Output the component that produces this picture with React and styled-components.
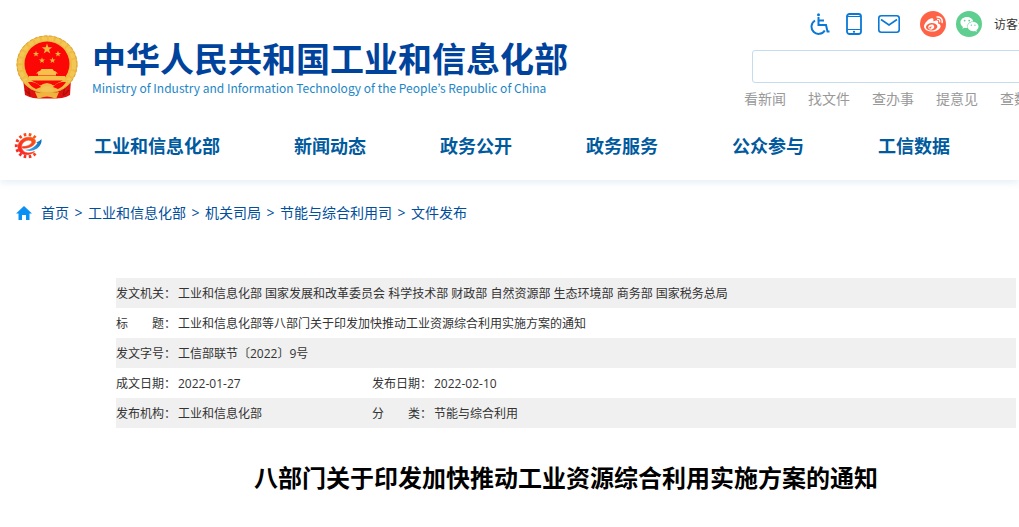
import React from 'react';
import styled, { createGlobalStyle } from 'styled-components';
import { FaWeibo, FaWeixin } from 'react-icons/fa';

const GlobalStyle = createGlobalStyle`
  * {
    box-sizing: border-box;
  }

  body {
    margin: 0;
    overflow-x: hidden;
    background: #fff;
    color: #333;
    font-family: 'Open Sans', 'Noto Sans CJK SC', sans-serif;
    font-size: 12px;
  }

  a {
    color: inherit;
    text-decoration: none;
  }
`;

const Page = styled.div`
  overflow: hidden;
`;

const Header = styled.header`
  box-shadow: 0 2px 8px rgba(0, 98, 170, 0.12);
`;

const TopBar = styled.div`
  display: flex;
  justify-content: space-between;
  min-width: 1116px;
  height: 112px;
  padding-left: 16px;
`;

const Brand = styled.a`
  display: flex;
  align-items: flex-start;
  gap: 14px;
  padding-top: 35px;
`;

const BrandText = styled.div`
  display: flex;
  flex-direction: column;
  padding-top: 2px;
  font-family: 'Noto Sans CJK KR', 'Noto Sans CJK SC', sans-serif;
  white-space: nowrap;
`;

const BrandName = styled.span`
  color: #00439c;
  font-family: 'Noto Sans CJK SC', sans-serif;
  font-size: 34px;
  font-weight: 700;
  line-height: 42px;
`;

const BrandSub = styled.span`
  color: #1c86c7;
  font-size: 12px;
  line-height: 18px;
`;

const Tools = styled.div`
  display: flex;
  flex-direction: column;
  width: 372px;
  padding-top: 11px;
`;

const ToolRow = styled.div`
  display: flex;
  align-items: center;
  gap: ${(props) => props.$gap}px;
`;

const Shortcuts = styled(ToolRow)`
  height: 26px;
  padding-left: 66px;
  white-space: nowrap;
`;

const IconLink = styled.a`
  display: flex;
`;

const RoundLink = styled.a`
  display: flex;
  align-items: center;
  justify-content: center;
  width: 26px;
  height: 26px;
  border-radius: 50%;
  background: ${(props) => props.$color};
  color: #fff;
  font-size: 19px;
`;

const SearchInput = styled.input`
  height: 33px;
  margin: 13px 0 6px 8px;
  padding: 0 10px;
  border: 1px solid #c5dcef;
  border-radius: 3px;
  outline: none;
  font: inherit;
`;

const QuickLinks = styled(ToolRow)`
  color: #999;
  font-size: 14px;
  line-height: 20px;
  white-space: nowrap;
`;

const Nav = styled.nav`
  display: flex;
  align-items: center;
  height: 68px;
  padding-left: 14px;
  gap: 52px;
`;

const NavList = styled.div`
  display: flex;
  gap: 74px;
  color: #005a9e;
  font-size: 18px;
  font-weight: 700;
  line-height: 24px;
  white-space: nowrap;
`;

const Breadcrumb = styled.nav`
  display: flex;
  align-items: center;
  gap: 5px;
  padding: 22px 16px 54px;
  color: #004e9c;
  font-size: 14px;
  line-height: 22px;
`;

const HomeLink = styled.a`
  display: flex;
  margin-right: 4px;
`;

const Separator = styled.span`
  width: 9px;
  text-align: center;
`;

const Article = styled.main`
  padding: 0 3px 31px 116px;
`;

const InfoTable = styled.table`
  width: 100%;
  border-collapse: collapse;
  table-layout: fixed;
  line-height: 28px;
`;

const InfoRow = styled.tr`
  &:nth-child(odd) {
    background: #f0f0f0;
  }
`;

const Label = styled.th`
  padding: 2px 0 0;
  font-weight: 400;
  text-align: left;
  white-space: nowrap;
`;

const Value = styled.td`
  padding: 2px 0 0;
`;

const Title = styled.h1`
  margin: 32px 0 0;
  color: #000;
  font-size: 24px;
  font-weight: 700;
  line-height: 36px;
  text-align: center;
`;

const STAR = '0,-1 0.24,-0.32 0.95,-0.31 0.38,0.12 0.59,0.81 0,0.4 -0.59,0.81 -0.38,0.12 -0.95,-0.31 -0.24,-0.32';

const stars = [
  [31, 14, 5.5],
  [20, 19, 3.2],
  [42, 19, 3.2],
  [26, 25.5, 3.2],
  [36.5, 25.5, 3.2],
];

function Emblem() {
  return (
    <svg width="62" height="64" viewBox="0 0 62 64" aria-hidden="true">
      <path d="M7 44L9 60q4 2 8 3l6 .5h17l6-.5q5-1 8-3l1-16z" fill="#e0120f" />
      <path d="M12 51l2 10M49 51l-2 10M9 55l5 5M53 55l-5 5" stroke="#a80f0c" strokeWidth="1.2" />
      <ellipse cx="31" cy="29.5" rx="30.5" ry="29" fill="#eebb45" />
      <ellipse cx="31" cy="29.5" rx="27" ry="26" fill="none" stroke="#f3c655" strokeWidth="4" strokeDasharray="5 2" />
      <ellipse cx="31" cy="29.5" rx="30" ry="28.6" fill="none" stroke="#dca336" strokeWidth="1" strokeDasharray="3 2" />
      <circle cx="31" cy="29" r="22.5" fill="#fb0806" />
      {stars.map(([x, y, r]) => (
        <polygon key={`${x}-${y}`} points={STAR} transform={`translate(${x} ${y}) scale(${r})`} fill="#f5b53c" />
      ))}
      <path d="M23 36h16l3 2.500H20zM22 38.500h18v2H22zM13 41h36v4.500H13z" fill="#f6c04b" />
      <path d="M24 36l1.500-2h11l1.500 2z" fill="#f6c04b" />
      <path d="M9 45q11 1 15 6l3-2 4-1 4 1 3 2q4-5 15-6l-4 6q-8 6-18 6T12 51z" fill="#f0bb48" />
      <path d="M16 47q6 1 9 5l-5 2q-5-2-8-7zM46 47q-6 1-9 5l5 2q5-2 8-7z" fill="#fb0806" />
      <path d="M19 57l6 1 6-3 6 3 6-1-3 7q-9-5-18 0z" fill="#efb43f" />
      <path d="M26 53q5-4 10 0l2 2q-7 4-14 0z" fill="#f4c355" />
    </svg>
  );
}

function GearLogo() {
  return (
    <svg width="28" height="26" viewBox="0 0 28 26" fill="none" aria-hidden="true">
      <defs>
        <linearGradient id="gear" x1="0" y1="1" x2="1" y2="0">
          <stop offset="0" stopColor="#f5222a" />
          <stop offset="1" stopColor="#fa5a12" />
        </linearGradient>
        <linearGradient id="tail" x1="0" y1="1" x2="1" y2="0">
          <stop offset="0" stopColor="#45b2ee" />
          <stop offset="1" stopColor="#0565b8" />
        </linearGradient>
      </defs>
      <path d="M21.500 4.800A11.200 11.200 0 1 0 21.500 20.500" stroke="url(#gear)" strokeWidth="3" strokeDasharray="2.600 2.400" />
      <path
        d="M8.500 15C14 16 21.500 12.500 21.500 8.500C21.500 4 14 3 9.500 5.500C3.500 9 2.500 15.500 6 19.300C9.500 22.800 16.500 22.500 20.500 18.500C15.500 20.800 10.500 20.200 8.500 17C6.200 13 8.500 9 12.500 7.600C15.500 6.700 18 7.500 17.800 9.200C17.300 11.800 12 13.800 8.500 13.600Z"
        fill="url(#gear)"
        stroke="url(#gear)"
        strokeWidth="0.600"
      />
      <path d="M10 16.500C15.500 17.500 20.500 14.500 23.500 10L22 9.500Q26 8 27.500 6Q28 11.500 23.500 15.300Q17 19.800 10 16.500Z" fill="url(#tail)" />
    </svg>
  );
}

function AccessIcon() {
  return (
    <svg width="20" height="22" viewBox="0 0 20 22" fill="none" stroke="#0a78d6" strokeWidth="2" aria-hidden="true">
      <circle cx="8.500" cy="1.700" r="1.500" fill="#0a78d6" stroke="none" />
      <path d="M8.500 4v8h7.500l1.500 6.500h2" />
      <path d="M8.500 7.500h5.500" />
      <path d="M5 7.500A7.200 7.200 0 1 0 14.800 17.500" />
    </svg>
  );
}

function PhoneIcon() {
  return (
    <svg width="16" height="22" viewBox="0 0 16 22" fill="none" stroke="#0a78d6" aria-hidden="true">
      <rect x="1" y="1" width="14" height="20" rx="2.500" strokeWidth="1.800" />
      <path d="M1 3.500h14M1 16.500h14" strokeWidth="1.200" />
      <circle cx="8" cy="18.800" r="1.100" fill="#0a78d6" stroke="none" />
    </svg>
  );
}

function MailIcon() {
  return (
    <svg width="22" height="18" viewBox="0 0 22 18" fill="none" stroke="#0a78d6" strokeWidth="1.600" aria-hidden="true">
      <rect x="0.800" y="0.800" width="20.400" height="16.400" rx="2.500" />
      <path d="M3 4.500l8 5.500 8-5.500" />
    </svg>
  );
}

function HomeIcon() {
  return (
    <svg width="16" height="14" viewBox="0 0 16 14" fill="#0a8ff5" aria-hidden="true">
      <path d="M8 0l8 7.500h-2.500V14H10V9H6v5H2.500V7.500H0z" />
    </svg>
  );
}

const quickLinks = ['看新闻', '找文件', '查办事', '提意见', '查数据'];
const navItems = ['工业和信息化部', '新闻动态', '政务公开', '政务服务', '公众参与', '工信数据'];
const crumbs = ['首页', '工业和信息化部', '机关司局', '节能与综合利用司', '文件发布'];

const infoRows = [
  [['发文机关：', '工业和信息化部 国家发展和改革委员会 科学技术部 财政部 自然资源部 生态环境部 商务部 国家税务总局']],
  [['标　　题：', '工业和信息化部等八部门关于印发加快推动工业资源综合利用实施方案的通知']],
  [['发文字号：', '工信部联节〔2022〕9号']],
  [
    ['成文日期：', '2022-01-27'],
    ['发布日期：', '2022-02-10'],
  ],
  [
    ['发布机构：', '工业和信息化部'],
    ['分　　类：', '节能与综合利用'],
  ],
];

function App() {
  return (
    <Page>
      <GlobalStyle />
      <Header>
        <TopBar>
          <Brand href="#">
            <Emblem />
            <BrandText>
              <BrandName>中华人民共和国工业和信息化部</BrandName>
              <BrandSub>Ministry of Industry and Information Technology of the People’s Republic of China</BrandSub>
            </BrandText>
          </Brand>
          <Tools>
            <Shortcuts $gap={20}>
              <ToolRow $gap={16}>
                <IconLink href="#" aria-label="无障碍">
                  <AccessIcon />
                </IconLink>
                <IconLink href="#" aria-label="手机版">
                  <PhoneIcon />
                </IconLink>
                <IconLink href="#" aria-label="邮箱">
                  <MailIcon />
                </IconLink>
              </ToolRow>
              <ToolRow $gap={12}>
                <ToolRow $gap={10}>
                  <RoundLink href="#" $color="#ff6347" aria-label="微博">
                    <FaWeibo />
                  </RoundLink>
                  <RoundLink href="#" $color="#5fcf8f" aria-label="微信">
                    <FaWeixin />
                  </RoundLink>
                </ToolRow>
                <a href="#">访客登录</a>
              </ToolRow>
            </Shortcuts>
            <SearchInput type="text" aria-label="搜索" />
            <QuickLinks $gap={22}>
              {quickLinks.map((text) => (
                <a key={text} href="#">
                  {text}
                </a>
              ))}
            </QuickLinks>
          </Tools>
        </TopBar>
        <Nav>
          <GearLogo />
          <NavList>
            {navItems.map((text) => (
              <a key={text} href="#">
                {text}
              </a>
            ))}
          </NavList>
        </Nav>
      </Header>
      <Breadcrumb>
        <HomeLink href="#" aria-label="首页">
          <HomeIcon />
        </HomeLink>
        {crumbs.map((text, i) => (
          <React.Fragment key={text}>
            {i > 0 && <Separator>&gt;</Separator>}
            <a href="#">{text}</a>
          </React.Fragment>
        ))}
      </Breadcrumb>
      <Article>
        <InfoTable>
          <colgroup>
            <col width="62" />
            <col width="194" />
            <col width="62" />
            <col />
          </colgroup>
          <tbody>
            {infoRows.map((cells) => (
              <InfoRow key={cells[0][0]}>
                {cells.map(([label, value]) => (
                  <React.Fragment key={label}>
                    <Label scope="row">{label}</Label>
                    <Value colSpan={cells.length === 1 ? 3 : 1}>{value}</Value>
                  </React.Fragment>
                ))}
              </InfoRow>
            ))}
          </tbody>
        </InfoTable>
        <Title>八部门关于印发加快推动工业资源综合利用实施方案的通知</Title>
      </Article>
    </Page>
  );
}

export default App;
